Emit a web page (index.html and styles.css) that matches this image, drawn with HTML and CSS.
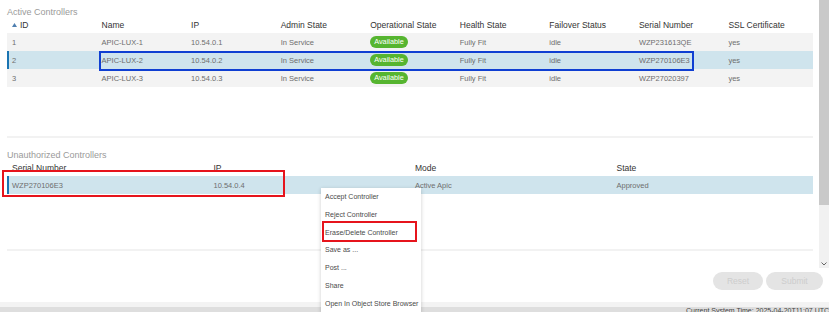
FILE: index.html
```html
<!DOCTYPE html>
<html lang="en">
<head>
  <meta charset="UTF-8">
  <meta name="viewport" content="width=device-width, initial-scale=1.0">
  <title>Controllers</title>
  <link rel="stylesheet" href="styles.css">
</head>
<body>
  <div id="page">
    <div id="pane">
      <div id="content">
        <div class="block-title">Active Controllers</div>
        <div class="grid active head">
          <div class="cell"><span class="sort"><svg width="5" height="4" viewBox="0 0 5 4"><path d="M0 4 L2.5 0 L5 4 Z" fill="#4f7fb0"/></svg></span>ID</div>
          <div class="cell">Name</div>
          <div class="cell">IP</div>
          <div class="cell">Admin State</div>
          <div class="cell">Operational State</div>
          <div class="cell">Health State</div>
          <div class="cell">Failover Status</div>
          <div class="cell">Serial Number</div>
          <div class="cell">SSL Certificate</div>
        </div>
        <div class="grid active row">
          <div class="cell">1</div>
          <div class="cell">APIC-LUX-1</div>
          <div class="cell">10.54.0.1</div>
          <div class="cell">In Service</div>
          <div class="cell"><span class="pill">Available</span></div>
          <div class="cell">Fully Fit</div>
          <div class="cell">idle</div>
          <div class="cell">WZP231613QE</div>
          <div class="cell">yes</div>
        </div>
        <div class="grid active row selected">
          <div class="cell">2</div>
          <div class="cell">APIC-LUX-2</div>
          <div class="cell">10.54.0.2</div>
          <div class="cell">In Service</div>
          <div class="cell"><span class="pill">Available</span></div>
          <div class="cell">Fully Fit</div>
          <div class="cell">idle</div>
          <div class="cell">WZP270106E3</div>
          <div class="cell">yes</div>
        </div>
        <div class="grid active row">
          <div class="cell">3</div>
          <div class="cell">APIC-LUX-3</div>
          <div class="cell">10.54.0.3</div>
          <div class="cell">In Service</div>
          <div class="cell"><span class="pill">Available</span></div>
          <div class="cell">Fully Fit</div>
          <div class="cell">idle</div>
          <div class="cell">WZP27020397</div>
          <div class="cell">yes</div>
        </div>

        <div class="sep sep-top"></div>

        <div class="block-title second">Unauthorized Controllers</div>
        <div class="grid unauth head">
          <div class="cell">Serial Number</div>
          <div class="cell">IP</div>
          <div class="cell">Mode</div>
          <div class="cell">State</div>
        </div>
        <div class="grid unauth row selected">
          <div class="cell">WZP270106E3</div>
          <div class="cell">10.54.0.4</div>
          <div class="cell">Active Apic</div>
          <div class="cell">Approved</div>
        </div>

        <div class="sep sep-bottom"></div>
      </div>
      <div id="scrollbar">
        <div class="thumb"></div>
        <div class="track">
          <svg width="6" height="4" viewBox="0 0 6 4"><path d="M0.5 0.5 L3 3 L5.5 0.5" fill="none" stroke="#666" stroke-width="1"/></svg>
        </div>
      </div>
    </div>

    <div id="actions">
      <button class="btn reset">Reset</button>
      <button class="btn submit">Submit</button>
    </div>

    <div id="footer-band"></div>
    <div id="status">Current System Time: 2025-04-20T11:07 UTC+02:00</div>

    <!-- annotations + context menu sit on top -->
    <div class="mark blue-mark"></div>
    <div class="mark red-mark row-mark"></div>

    <ul id="context-menu">
      <li>Accept Controller</li>
      <li>Reject Controller</li>
      <li>Erase/Delete Controller</li>
      <li>Save as ...</li>
      <li>Post ...</li>
      <li>Share</li>
      <li>Open In Object Store Browser</li>
    </ul>
    <div class="mark red-mark menu-mark"></div>
  </div>
</body>
</html>
```

FILE: styles.css
```css
body {
  margin: 0;
  overflow: hidden;
  background: #fff;
  font-family: "Liberation Sans", Arial, sans-serif;
  color: #333;
}

#page {
  position: relative;
  width: 829px;
  height: 312px;
  overflow: hidden;
}

#pane {
  display: flex;
  height: 268px;
}

#content {
  flex: 1;
  padding: 6px 6px 0 7px;
  overflow: hidden;
}

.block-title {
  height: 11px;
  line-height: 12px;
  font-size: 9px;
  color: #9a9a9a;
}

.block-title.second {
  margin-top: 11px;
}

.grid {
  display: grid;
  align-items: center;
}

.grid.active { grid-template-columns: repeat(9, 1fr); }
.grid.unauth { grid-template-columns: repeat(4, 1fr); }

.cell {
  padding-left: 5px;
  white-space: nowrap;
  overflow: hidden;
}

.head {
  height: 16px;
  padding-top: 1px;
  padding-bottom: 1px;
  box-sizing: border-box;
  font-size: 8.5px;
  color: #333;
  line-height: 14px;
}

.sort {
  display: inline-block;
  margin-right: 3px;
  vertical-align: 1px;
}

.sort svg { display: block; }

.row {
  height: 18px;
  font-size: 7.5px;
  color: #6e6e6e;
  background: #f3f3f3;
}

.row.selected {
  background: #cfe4ed;
  box-shadow: inset 2px 0 0 #1a74b2;
}

.pill {
  display: inline-block;
  height: 12px;
  line-height: 12px;
  padding: 0 4px;
  border-radius: 6px;
  background: #56b530;
  color: #fff;
  font-size: 7.3px;
}

.sep {
  height: 2px;
  background: #f2f2f2;
}

.sep-top { margin-top: 49px; }
.sep-bottom { margin-top: 55px; }

#scrollbar {
  width: 10px;
  display: flex;
  flex-direction: column;
}

#scrollbar .thumb {
  height: 205px;
  background: #c9c9c9;
}

#scrollbar .track {
  flex: 1;
  background: #f1f1f1;
  display: flex;
  align-items: flex-end;
  justify-content: center;
  padding-bottom: 2px;
}

#scrollbar .track svg { display: block; }

#actions {
  display: flex;
  justify-content: flex-end;
  gap: 3px;
  margin-top: 4px;
  padding-right: 6px;
}

.btn {
  height: 18px;
  border: none;
  border-radius: 9px;
  background: #e4e4e4;
  color: #cdcdcd;
  font-family: "Liberation Sans", Arial, sans-serif;
  font-size: 8.5px;
  padding: 0;
}

.btn.reset { width: 50px; }
.btn.submit { width: 57px; }

#footer-band {
  margin-top: 12px;
  height: 5px;
  background: #f3f3f3;
}

#status {
  height: 14px;
  background: #dedede;
  padding-left: 686px;
  font-size: 7px;
  line-height: 8px;
  color: #444;
  white-space: nowrap;
}

.mark {
  position: absolute;
  box-sizing: border-box;
  pointer-events: none;
}

.blue-mark {
  left: 99px;
  top: 51px;
  width: 595px;
  height: 20px;
  border: 2px solid #0f3fd2;
}

.red-mark { border: 2px solid #e6141c; }

.row-mark {
  left: 2px;
  top: 170px;
  width: 283px;
  height: 27px;
}

.menu-mark {
  left: 322px;
  top: 221px;
  width: 95px;
  height: 21px;
}

#context-menu {
  position: absolute;
  left: 321px;
  top: 188px;
  width: 100px;
  margin: 0;
  padding: 0;
  list-style: none;
  background: #fff;
  box-shadow: 0 1px 4px rgba(0, 0, 0, 0.2);
}

#context-menu li {
  height: 17.8px;
  line-height: 17.8px;
  padding-left: 4px;
  font-size: 7px;
  color: #4a4a4a;
  white-space: nowrap;
}
```
